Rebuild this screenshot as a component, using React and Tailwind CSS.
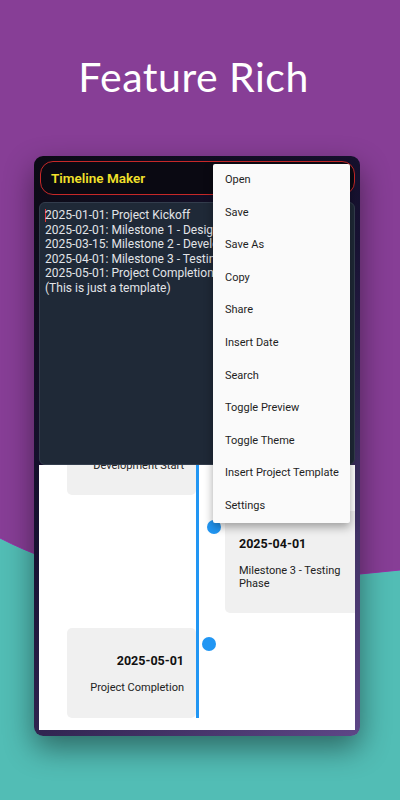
const menuItems = [
  'Open',
  'Save',
  'Save As',
  'Copy',
  'Share',
  'Insert Date',
  'Search',
  'Toggle Preview',
  'Toggle Theme',
  'Insert Project Template',
  'Settings',
];

const notes = [
  '2025-01-01: Project Kickoff',
  '2025-02-01: Milestone 1 - Design Complete',
  '2025-03-15: Milestone 2 - Development Start',
  '2025-04-01: Milestone 3 - Testing Phase',
  '2025-05-01: Project Completion',
  '(This is just a template)',
];

function Card({ date, desc, align = 'left', className = '' }) {
  const pad = align === 'right' ? 'pr-[12px] pl-[10px] text-right' : 'pl-[14px] pr-[10px] text-left';
  return (
    <div className={`bg-[#f0f0f0] rounded-[5px] pt-[25px] pb-[23px] ${pad} ${className}`}>
      <div className="text-[12.5px] leading-[16px] font-bold text-[#111]">{date}</div>
      <div className="mt-[12px] text-[11px] leading-[13px] text-[#222]">{desc}</div>
    </div>
  );
}

function Dot() {
  return <div className="w-[14px] h-[14px] rounded-full bg-[#2196f3] shrink-0" />;
}

function Timeline() {
  return (
    <div className="h-[265px] bg-white overflow-hidden pl-[28px] pb-[5px]">
      {/* row 1: card cut off by the editor above */}
      <div className="flex">
        <div className="w-[129px] pb-[16px]">
          <Card
            align="right"
            date="2025-03-15"
            desc={<>Milestone 2 -<br />Development Start</>}
            className="-mt-[72px]"
          />
        </div>
        <div className="flex-1 border-l-[3px] border-[#2196f3]" />
      </div>
      {/* row 2 */}
      <div className="flex">
        <div className="w-[129px]" />
        <div className="flex-1 border-l-[3px] border-[#2196f3] flex items-start pb-[15px]">
          <div className="ml-[8px] mt-[9px]"><Dot /></div>
          <Card
            date="2025-04-01"
            desc={<>Milestone 3 - Testing<br />Phase</>}
            className="ml-[4px] flex-1 -mr-[20px]"
          />
        </div>
      </div>
      {/* row 3 */}
      <div className="flex">
        <div className="w-[129px]">
          <Card align="right" date="2025-05-01" desc="Project Completion" className="h-[90px]" />
        </div>
        <div className="flex-1 border-l-[3px] border-[#2196f3] pb-[7px]">
          <div className="ml-[3px] mt-[9px]"><Dot /></div>
        </div>
      </div>
    </div>
  );
}

export default function App() {
  return (
    <div className="relative w-[400px] h-[800px] overflow-hidden bg-[#873e96] font-['Roboto',sans-serif]">
      <svg className="absolute inset-0" width="400" height="800" viewBox="0 0 400 800">
        <path d="M0,538 C120,600 250,585 400,570 L400,800 L0,800 Z" fill="#52bdb5" />
        <path d="M0,538 C120,600 250,585 400,570" fill="none" stroke="#9a2fa6" strokeWidth="1" />
      </svg>

      <div className="relative">
        <h1 className="pt-[52px] pr-[13px] text-center text-white text-[41px] leading-[50px] font-['Lato',sans-serif] tracking-[0.5px]">
          Feature Rich
        </h1>

        <div className="relative ml-[34px] mt-[54px] w-[326px] h-[580px] rounded-[9px] pt-[5px] pl-[5px] pr-[5px] pb-[6px] bg-[linear-gradient(135deg,#0b0a14_0%,#181233_45%,#5e4787_100%)] shadow-[0_12px_30px_rgba(0,0,0,0.45)]">
          <div className="flex flex-col h-full">
            <div className="h-[34px] ml-[1px] rounded-[13px] border-[1.5px] border-[#c62828] bg-[#0a0912] flex items-center pl-[10px]">
              <span className="text-[13.5px] font-semibold text-[#f2e12b]">Timeline Maker</span>
            </div>
            <div className="mt-[7px] h-[263px] rounded-[6px] border border-[#333d4d] bg-[#1f2937] pl-[5px] pt-[5px] overflow-hidden">
              {notes.map((line, i) => (
                <div key={i} className="text-[12px] leading-[14.6px] text-[#e2e4e8] whitespace-nowrap">
                  {i === 0 && <span className="inline-block w-[1px] h-[13px] bg-[#e53935] align-middle -mr-[1px]" />}
                  {line}
                </div>
              ))}
            </div>
            <Timeline />
          </div>

          <div className="absolute left-[179px] top-[8px] w-[137px] bg-[#fafafa] rounded-[2px] shadow-[0_4px_10px_rgba(0,0,0,0.35)]">
            {menuItems.map((item) => (
              <div key={item} className="h-[32.6px] flex items-center pl-[12px] text-[11px] text-[#1f1f1f] whitespace-nowrap">
                {item}
              </div>
            ))}
          </div>
        </div>
      </div>
    </div>
  );
}
